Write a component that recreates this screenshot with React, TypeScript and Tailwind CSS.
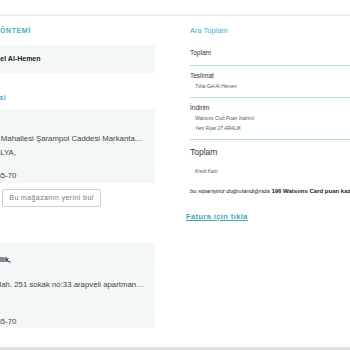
const sans = "font-['Liberation_Sans',Arial,sans-serif]";

function SummaryRow({ label, notes }: { label: string; notes: string[] }) {
  return (
    <div className="pt-[6px] pb-[7px] border-b border-[#b3dbe1]">
      <p className="text-[6.5px] leading-[8px] text-[#333]">{label}</p>
      {notes.map((n, i) => (
        <p key={i} className="mt-[4px] pl-[5px] text-[4.8px] leading-[6px] italic text-[#555] whitespace-nowrap">
          {n}
        </p>
      ))}
    </div>
  );
}

export default function App() {
  return (
    <div className={`w-[350px] h-[350px] overflow-hidden bg-white flex flex-col ${sans}`}>
      <div className="h-[16px] shrink-0 border-b-2 border-[#efefef]" />

      <div className="flex flex-1 min-h-0">
        {/* left column, scrolled partly out of view */}
        <div className="w-[204px] shrink-0 -ml-[49px]">
          <h2 className="mt-[10px] pl-[2px] text-[7px] leading-[10px] font-bold tracking-[0.6px] text-[#3fb0c2]">
            TESLİMAT YÖNTEMİ
          </h2>
          <div className="mt-[9px] h-[28px] pl-[26px] pt-[10px] bg-[#f3f7f7]">
            <p className="text-[7px] leading-[8px] font-bold text-[#222] whitespace-nowrap">Tıkla Gel Al-Hemen</p>
          </div>

          <h2 className="mt-[20px] text-[7px] leading-[10px] font-bold tracking-[0.5px] text-[#3fb0c2]">
            Mağaza Adresi
          </h2>
          <div className="mt-[6px] h-[74px] pl-[26px] pr-[12px] pt-[25px] bg-[#f3f7f7] text-[7.8px] leading-[9px] text-[#444]">
            <p className="truncate">Elmalı Mahallesi Şarampol Caddesi Markantalya AVM No:42 Muratpaşa</p>
            <p className="mt-[5px] ml-[3px] whitespace-nowrap">ANTALYA,</p>
            <p className="mt-[14px] whitespace-nowrap">0242 65-70</p>
          </div>
          <button className="mt-[5px] ml-[51px] h-[18px] w-[99px] rounded-[2px] border border-[#cfcfcf] bg-white text-[7px] tracking-[0.4px] text-[#777]">
            Bu mağazanın yerini bul
          </button>

          <div className="mt-[36px] h-[85px] pl-[26px] pr-[9px] pt-[12px] bg-[#f3f7f7] text-[7.8px] leading-[9px] text-[#444]">
            <p className="ml-[5px] text-[7px] font-bold text-[#222] whitespace-nowrap">Güzellik,</p>
            <p className="mt-[16px] truncate">Lara Mah. 251 sokak no:33 arapveli apartmanı daire 5 Muratpaşa</p>
            <p className="mt-[28px] whitespace-nowrap">0242 65-70</p>
          </div>
        </div>

        {/* right column: order summary */}
        <div className="w-[220px] shrink-0 ml-[35px]">
          <h3 className="mt-[10px] text-[7.5px] leading-[10px] text-[#3fb0c2]">Ara Toplam</h3>
          <div className="mt-[13px] pb-[8px] border-b border-[#b3dbe1]">
            <p className="text-[6.5px] leading-[8px] text-[#333]">Toplam</p>
          </div>
          <SummaryRow label="Teslimat" notes={['Tıkla Gel Al-Hemen']} />
          <SummaryRow label="İndirim" notes={['Watsons Club Puan İndirimi', 'Yeni Fiyat 27 ARALIK']} />

          <p className="mt-[6px] text-[8.5px] leading-[12px] text-[#333]">Toplam</p>
          <p className="mt-[11px] pl-[5px] text-[4.8px] leading-[6px] italic text-[#555]">Kredi Kartı</p>
          <p className="mt-[12px] text-[6px] leading-[8px] text-[#222] whitespace-nowrap">
            <span className="italic">bu siparişiniz doğrulandığında </span>
            <span className="font-bold">196 Watsons Card puan kazanacaksınız</span>
          </p>
          <a href="#" className="block mt-[17px] -ml-[4px] text-[7.5px] leading-[10px] font-bold tracking-[0.4px] text-[#3fa9b5] underline">
            Fatura için tıkla
          </a>
        </div>
      </div>

      <div className="h-[3px] shrink-0 bg-[#e0e0e0]" />
    </div>
  );
}
